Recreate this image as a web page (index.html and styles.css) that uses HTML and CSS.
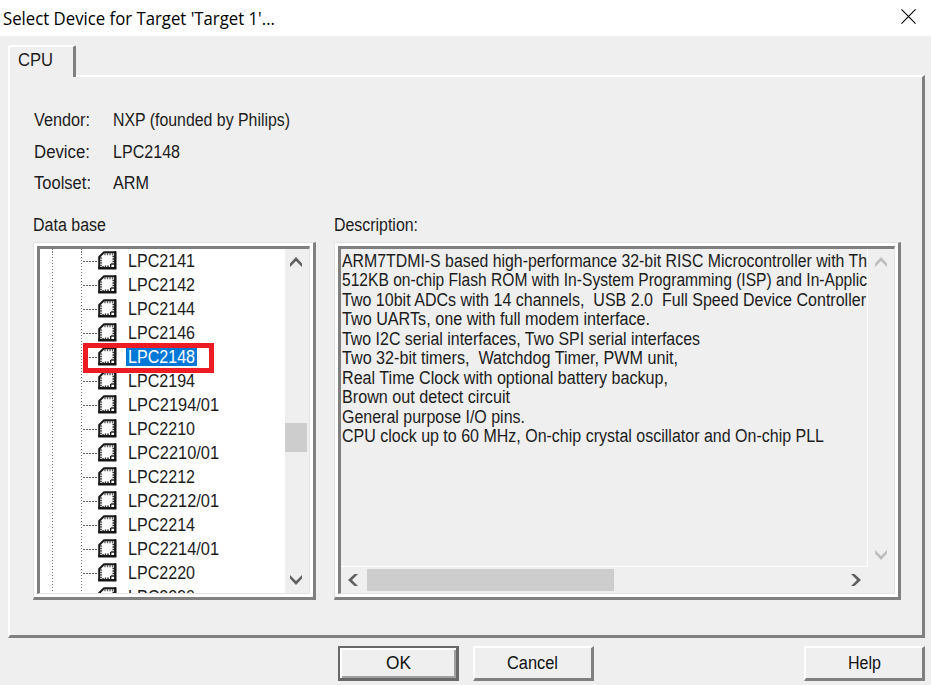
FILE: index.html
```html
<!DOCTYPE html>
<html lang="en">
<head>
<meta charset="utf-8">
<title>Select Device for Target 'Target 1'...</title>
<link rel="stylesheet" href="styles.css">
</head>
<body>
<svg width="0" height="0" class="defs">
  <symbol id="chip" viewBox="0 0 19 19">
    <path d="M1 18V6L6 1H18V18Z" fill="#fff"/>
    <path d="M1.200 17.500V6L6 1.200H18" fill="none" stroke="#1a1a1a" stroke-width="2"/>
    <path d="M7 2v2.300M9.500 2v2.300M12 2v2.300M14.500 2v2.300M2 7h2M2 9.500h2M2 12h2M2 14.500h2" stroke="#555" stroke-width="1.300"/>
    <path d="M17.300 .2V17.300H.2" fill="none" stroke="#111" stroke-width="2.400"/>
    <path d="M5 15v2M7.500 14.500v3M10 14.500v3M12.700 13v4.500M14.500 5.500h3M14.500 8h3M14.500 10.500h3M13 13h4.500" stroke="#222" stroke-width="1.400"/>
  </symbol>
  <symbol id="arrow" viewBox="0 0 12 10">
    <path d="M0 6.500L6 0l6 6.500v3.500L6 4 0 10Z" fill="currentColor"/>
  </symbol>
</svg>
<header class="titlebar">
  <h1><span data-w="272">Select Device for Target 'Target 1'...</span></h1>
  <svg class="close" viewBox="0 0 16 16"><path d="M.5 .5l15 15M15.500 .5l-15 15" stroke="#000" stroke-width="1.2"/></svg>
</header>
<main>
  <div class="tab"><span data-w="35">CPU</span></div>
  <section class="panel">
    <dl>
      <dt><span data-w="56">Vendor:</span></dt><dd><span data-w="177">NXP (founded by Philips)</span></dd>
      <dt><span data-w="56">Device:</span></dt><dd><span data-w="67">LPC2148</span></dd>
      <dt><span data-w="57">Toolset:</span></dt><dd><span data-w="36">ARM</span></dd>
    </dl>
    <div class="columns">
      <div class="database">
        <h2><span data-w="73">Data base</span></h2>
        <div class="frame"><div class="well tree">
          <ul id="devices"></ul>
          <div class="vscroll">
            <svg class="up"><use href="#arrow"/></svg>
            <div class="thumb"></div>
            <svg class="down"><use href="#arrow"/></svg>
          </div>
        </div></div>
      </div>
      <div class="description">
        <h2><span data-w="84">Description:</span></h2>
        <div class="frame"><div class="well details">
          <div class="text">
            <p><span data-w="525">ARM7TDMI-S based high-performance 32-bit RISC Microcontroller with Th</span></p>
            <p><span data-w="525">512KB on-chip Flash ROM with In-System Programming (ISP) and In-Applic</span></p>
            <p><span data-w="524">Two 10bit ADCs with 14 channels,&nbsp; USB 2.0&nbsp; Full Speed Device Controller</span></p>
            <p><span data-w="308">Two UARTs, one with full modem interface.</span></p>
            <p><span data-w="358">Two I2C serial interfaces, Two SPI serial interfaces</span></p>
            <p><span data-w="336">Two 32-bit timers,&nbsp; Watchdog Timer, PWM unit,</span></p>
            <p><span data-w="326">Real Time Clock with optional battery backup,</span></p>
            <p><span data-w="168">Brown out detect circuit</span></p>
            <p><span data-w="183">General purpose I/O pins.</span></p>
            <p><span data-w="482">CPU clock up to 60 MHz, On-chip crystal oscillator and On-chip PLL</span></p>
          </div>
          <div class="vscroll disabled">
            <svg class="up"><use href="#arrow"/></svg>
            <svg class="down"><use href="#arrow"/></svg>
          </div>
          <div class="hscroll">
            <svg class="left"><use href="#arrow"/></svg>
            <div class="thumb"></div>
            <svg class="right"><use href="#arrow"/></svg>
          </div>
        </div></div>
      </div>
    </div>
  </section>
  <footer>
    <button class="default"><span data-w="25">OK</span></button>
    <button><span data-w="51">Cancel</span></button>
    <button class="help"><span data-w="33">Help</span></button>
  </footer>
</main>
<script src="app.js"></script>
</body>
</html>
```
FILE: app.js
```js
const devices = ["LPC2141", "LPC2142", "LPC2144", "LPC2146", "LPC2148", "LPC2194",
  "LPC2194/01", "LPC2210", "LPC2210/01", "LPC2212", "LPC2212/01", "LPC2214",
  "LPC2214/01", "LPC2220", "LPC2290"];

document.getElementById("devices").innerHTML = devices.map(name => {
  const selected = name === "LPC2148";
  const width = name.length > 7 ? 91 : 67;
  return `<li class="${selected ? "selected" : ""}"><i></i><svg class="chip"><use href="#chip"/></svg>` +
    `<b><span data-w="${width}">${name}</span></b>${selected ? '<em class="marker"></em>' : ""}</li>`;
}).join("");

for (const label of document.querySelectorAll("[data-w]")) {
  const natural = label.getBoundingClientRect().width;
  label.style.transform = `scaleX(${label.dataset.w / natural})`;
  label.style.marginRight = `${label.dataset.w - natural}px`;
}
```
FILE: styles.css
```css
* { box-sizing: border-box; }
body {
  margin: 0;
  width: 931px;
  height: 685px;
  overflow: hidden;
  background: #efefef;
  color: #1c1c1c;
  font: 18px/24px "Liberation Sans", Arial, sans-serif;
}
.defs { position: absolute; }
svg { display: block; overflow: visible; }
[data-w] { display: inline-block; white-space: pre; transform-origin: 0 50%; }
h1, h2, p, ul, dl, dd { margin: 0; padding: 0; font-size: inherit; font-weight: normal; }

.titlebar {
  height: 36px;
  padding: 0 15px 0 3px;
  display: flex;
  align-items: center;
  justify-content: space-between;
  background: #fff;
  color: #000;
}
.titlebar h1 { font: 18px/34px "Open Sans", sans-serif; }
.close { width: 15px; height: 15px; margin-top: -3px; }

main { padding: 9px 6px 0 8px; }
.tab {
  position: relative;
  width: 68px;
  height: 32px;
  margin-bottom: -2px;
  padding: 1px 0 0 7.5px;
  background: #efefef;
  border: 2px solid #fff;
  border-right: 3px solid #808080;
  border-bottom: 0;
  border-radius: 3px 2px 0 0;
}
.panel {
  height: 563px;
  padding: 28px 21px 0 23px;
  border: 2px solid #fff;
  border-right: 3px solid #808080;
  border-bottom: 3px solid #808080;
}
dl {
  display: grid;
  grid-template-columns: 80px 1fr;
  grid-auto-rows: 31.5px;
  line-height: 31.5px;
  height: 105px;
}
dt { padding-left: 1px; }
.columns { display: flex; gap: 18px; }
.database { width: 283px; }
.description { width: 567px; }
h2 { height: 32px; line-height: 30px; }
.frame {
  height: 358px;
  padding: 3px;
  background: #fff;
  border: solid #808080;
  border-width: 1px 3px 3px 1px;
  border-top-color: #e3e3e3;
  border-left-color: #e3e3e3;
}
.well {
  height: 100%;
  overflow: hidden;
  border: solid #808080;
  border-width: 3px 1px 1px 3px;
  border-right-color: #e3e3e3;
  border-bottom-color: #e3e3e3;
}
.tree { display: flex; background: #fff; }
#devices {
  flex: 1;
  list-style: none;
  margin-top: -1px;
  padding-left: 12px;
  background:
    repeating-linear-gradient(#777 0 1.500px, #fff 1.500px 3px) 12px 0 / 1px 100% no-repeat,
    repeating-linear-gradient(#777 0 1.500px, #fff 1.500px 3px) 41px 0 / 1px 100% no-repeat;
}
#devices li { position: relative; display: flex; align-items: center; height: 24px; padding-left: 31px; }
#devices i {
  width: 15px;
  height: 1px;
  margin-top: 2px;
  background: repeating-linear-gradient(90deg, #666 0 1.500px, #fff 1.500px 3px);
}
.chip { width: 19px; height: 19px; }
#devices b { font-weight: normal; padding-left: 2px; margin-left: 9px; height: 20px; line-height: 22px; width: 71px; }
.selected b { background: #0078d7; color: #fff; }
.marker {
  position: absolute;
  z-index: 1;
  left: 31px;
  top: -1px;
  width: 131px;
  height: 30px;
  border: 5px solid #ed1c24;
}
.vscroll {
  width: 24.5px;
  display: flex;
  flex-direction: column;
  background: #efefef;
  color: #606060;
}
.vscroll svg, .hscroll svg { width: 12px; height: 10px; flex: none; }
.vscroll .up { margin: 8px 0 0 5px; }
.vscroll .down { margin: auto 0 8px 5px; transform: rotate(180deg); }
.vscroll .thumb { width: 22.500px; height: 28.500px; margin-top: 156px; background: #cdcdcd; }

.details {
  display: grid;
  grid-template: 318px 1fr / 527px 1fr;
  background: #efefef;
}
.text {
  overflow: hidden;
  padding: 2.5px 0 0 1px;
  border-right: 1px solid #fff;
  border-bottom: 1px solid #fff;
}
.text p { height: 19.5px; line-height: 19.5px; white-space: nowrap; }
.disabled { width: auto; color: #bdbdbd; }
.disabled .up { margin-left: 7px; }
.disabled .down { margin-left: 7px; margin-bottom: 7px; }
.hscroll { display: flex; align-items: center; color: #606060; }
.hscroll .left { transform: rotate(-90deg); margin-left: 6px; }
.hscroll .right { transform: rotate(90deg); margin: 0 6px 0 auto; }
.hscroll .thumb { width: 247px; height: 22px; margin-left: 8px; background: #cdcdcd; }

footer { display: flex; padding-top: 8px; }
button {
  width: 121px;
  height: 35px;
  margin-left: 14px;
  padding: 0;
  font: inherit;
  line-height: 28px;
  color: #111;
  background: #efefef;
  border: 2px solid #fff;
  border-right: 3px solid #808080;
  border-bottom: 3px solid #808080;
}
button.default {
  margin-left: 330px;
  border: 2px solid #696969;
  border-right-width: 3px;
  border-bottom-width: 3px;
  box-shadow: inset 2px 2px #fff, inset -2px -2px #a0a0a0;
}
button:not(.default) { padding-right: 2px; }
button.help { margin-left: auto; padding: 0; }
```
